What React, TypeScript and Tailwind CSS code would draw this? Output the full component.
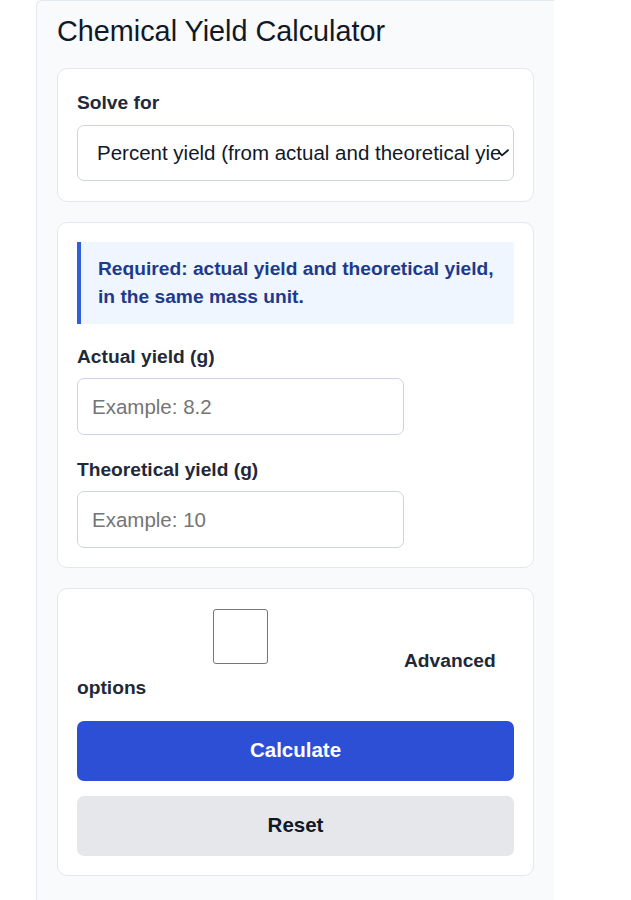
import React, { useState } from 'react';

export default function App() {
  const [mode, setMode] = useState('percent');
  const [actual, setActual] = useState('');
  const [theoretical, setTheoretical] = useState('');
  const [advanced, setAdvanced] = useState(false);

  const reset = () => {
    setActual('');
    setTheoretical('');
    setAdvanced(false);
  };

  return (
    <div className="min-h-screen bg-white font-['Liberation_Sans',Arial,sans-serif] text-[#111827]">
      <div className="ml-[36px] w-[518px] min-h-screen bg-[#f8fafc] border-l border-t border-[#e2e8f0] rounded-tl-md px-5 pt-[13px] pb-5">
        <h1 className="text-[28.8px] leading-[34px] font-normal mb-[20px]">Chemical Yield Calculator</h1>

        {/* Mode */}
        <div className="bg-white border border-[#e2e8f0] rounded-[10px] p-[19px] pb-5 mb-5">
          <label className="block text-[19.2px] leading-[29px] font-bold text-[#1f2937] mb-[8px]">Solve for</label>
          <div className="relative">
            <select
              value={mode}
              onChange={(e) => setMode(e.target.value)}
              className="block w-full h-[56px] appearance-none bg-white border border-[#cbd5e1] rounded-[7px] pl-[19px] pr-[13px] text-[20.5px] text-[#111827]"
            >
              <option value="percent">Percent yield (from actual and theoretical yield)</option>
              <option value="actual">Actual yield (from percent and theoretical yield)</option>
              <option value="theoretical">Theoretical yield (from actual and percent yield)</option>
            </select>
            <svg
              className="absolute right-[5px] top-[24px] w-[11px] h-[8px] pointer-events-none"
              viewBox="0 0 11 8"
              fill="none"
              stroke="#111827"
              strokeWidth="1.8"
              strokeLinecap="round"
              strokeLinejoin="round"
            >
              <path d="M1 3.2 L4 6.4 L10 1.2" />
            </svg>
          </div>
        </div>

        {/* Inputs */}
        <div className="bg-white border border-[#e2e8f0] rounded-[10px] p-[19px] mb-5">
          <div className="bg-[#eff6ff] border-l-4 border-[#2f5fdf] pl-[17px] pr-4 py-[13px] mb-[18px] text-[19.2px] leading-[28px] font-bold text-[#1e3a8a]">
            Required: actual yield and theoretical yield, in the same mass unit.
          </div>

          <label className="block text-[19.2px] leading-[29px] font-bold text-[#1f2937] mb-[7px]">Actual yield (g)</label>
          <input
            type="text"
            value={actual}
            onChange={(e) => setActual(e.target.value)}
            placeholder="Example: 8.2"
            className="block w-[327px] h-[57px] border border-[#cbd5e1] rounded-[7px] px-[14px] text-[20.5px] placeholder:text-[#757575] mb-5"
          />

          <label className="block text-[19.2px] leading-[29px] font-bold text-[#1f2937] mb-[7px]">Theoretical yield (g)</label>
          <input
            type="text"
            value={theoretical}
            onChange={(e) => setTheoretical(e.target.value)}
            placeholder="Example: 10"
            className="block w-[327px] h-[57px] border border-[#cbd5e1] rounded-[7px] px-[14px] text-[20.5px] placeholder:text-[#757575]"
          />
        </div>

        {/* Actions */}
        <div className="bg-white border border-[#e2e8f0] rounded-[10px] p-[19px]">
          <label className="block text-[19.2px] leading-[1.4] font-bold text-[#1f2937] mb-[19px]">
            <span className="inline-block align-[2px] w-[327px] h-[57px] overflow-hidden">
              <input
                type="checkbox"
                checked={advanced}
                onChange={(e) => setAdvanced(e.target.checked)}
                className="block mx-auto mt-px w-[55px] h-[55px] appearance-none bg-white border border-[#767676] rounded-[3px] checked:bg-[#2c4fd5]"
              />
            </span>
            Advanced options
          </label>

          <button
            type="button"
            className="block w-full h-[60px] rounded-[7px] bg-[#2c4fd5] text-white text-[20.5px] font-bold mb-[15px]"
          >
            Calculate
          </button>
          <button
            type="button"
            onClick={reset}
            className="block w-full h-[60px] rounded-[7px] bg-[#e5e7eb] text-[#111827] text-[20.5px] font-bold"
          >
            Reset
          </button>
        </div>
      </div>
    </div>
  );
}
